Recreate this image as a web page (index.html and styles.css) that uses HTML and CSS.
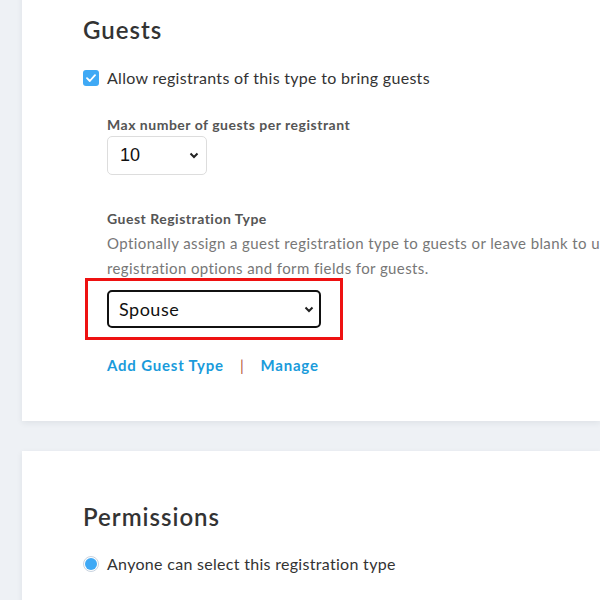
FILE: index.html
```html
<!DOCTYPE html>
<html lang="en">
<head>
    <meta charset="UTF-8">
    <meta name="viewport" content="width=device-width, initial-scale=1.0">
    <title>Registration Type</title>
    <link rel="stylesheet" href="styles.css">
</head>
<body>
    <div class="page">
        <section class="card card-guests">
            <h2>Guests</h2>
            <label class="check-row">
                <span class="checkbox">
                    <svg width="10" height="8" viewBox="0 0 10 8"><path d="M1 4.2 L3.8 7 L9 1.2" fill="none" stroke="#fff" stroke-width="1.8" stroke-linecap="round" stroke-linejoin="round"/></svg>
                </span>
                Allow registrants of this type to bring guests
            </label>

            <div class="sub">
                <div class="field">
                    <div class="field-label">Max number of guests per registrant</div>
                    <div class="select select-small">
                        <span>10</span>
                        <svg class="caret" width="10" height="7" viewBox="0 0 10 7"><path d="M1.5 1.5 L5 5 L8.5 1.5" fill="none" stroke="#222" stroke-width="2"/></svg>
                    </div>
                </div>

                <div class="field field-type">
                    <div class="field-label">Guest Registration Type</div>
                    <p class="help">Optionally assign a guest registration type to guests or leave blank to use the same registration options and form fields for guests.</p>
                    <div class="highlight">
                        <div class="select select-type">
                            <span>Spouse</span>
                            <svg class="caret" width="10" height="7" viewBox="0 0 10 7"><path d="M1.5 1.5 L5 5 L8.5 1.5" fill="none" stroke="#222" stroke-width="2"/></svg>
                        </div>
                    </div>
                    <div class="links">
                        <a href="#">Add Guest Type</a>
                        <span class="sep">|</span>
                        <a href="#">Manage</a>
                    </div>
                </div>
            </div>
        </section>

        <section class="card card-permissions">
            <h2>Permissions</h2>
            <label class="check-row">
                <span class="radio"><span class="dot"></span></span>
                Anyone can select this registration type
            </label>
        </section>
    </div>
</body>
</html>
```

FILE: styles.css
```css
body {
    margin: 0;
    background-color: #eef1f5;
    font-family: Lato, "Noto Sans", Arial, sans-serif;
    color: #333;
    overflow: hidden;
}

.page {
    display: flex;
    flex-direction: column;
    gap: 30px;
    padding-left: 22px;
    margin-top: -30px;
}

.card {
    background-color: white;
    padding: 0 0 0 61px;
    box-shadow: 0 2px 6px rgba(40, 50, 70, 0.08);
}

.card-guests {
    padding-top: 43px;
    box-sizing: border-box;
    height: 451px;
}

.card-permissions {
    padding-top: 49px;
    height: 200px;
}

h2 {
    margin: 0;
    font-size: 24px;
    font-weight: 600;
    letter-spacing: 1px;
    color: #333;
    line-height: 34px;
}

.check-row {
    display: flex;
    align-items: center;
    gap: 8px;
    font-size: 16px;
    letter-spacing: 0.3px;
    color: #333;
    margin-top: 19px;
    line-height: 24px;
}

.card-permissions .check-row {
    margin-top: 18px;
}

.checkbox {
    width: 16px;
    height: 16px;
    border-radius: 3px;
    background-color: #3fa9f5;
    display: flex;
    align-items: center;
    justify-content: center;
    flex-shrink: 0;
}

.radio {
    width: 14px;
    height: 14px;
    border: 1px solid #c9d3df;
    border-radius: 50%;
    display: flex;
    align-items: center;
    justify-content: center;
    flex-shrink: 0;
}

.radio .dot {
    width: 12px;
    height: 12px;
    border-radius: 50%;
    background-color: #3fa9f5;
}

.sub {
    padding-left: 24px;
    padding-top: 26px;
}

.field-label {
    font-size: 14px;
    font-weight: 700;
    letter-spacing: 0.5px;
    color: #555;
    line-height: 18px;
}

.select {
    display: flex;
    align-items: center;
    justify-content: space-between;
    box-sizing: border-box;
    background-color: white;
    color: #111;
    border-radius: 5px;
}

.select-small {
    width: 100px;
    height: 39px;
    margin-top: 2px;
    border: 1px solid #ddd;
    padding: 0 7px 0 12px;
    font-family: Arial, "Liberation Sans", sans-serif;
    font-size: 18px;
}

.field-type {
    margin-top: 35px;
}

.help {
    margin: 3px 0 0;
    font-size: 15px;
    letter-spacing: 0.4px;
    line-height: 25px;
    color: #777;
    width: 640px;
}

.highlight {
    margin: -3px 0 0 -22px;
    width: 258px;
    box-sizing: border-box;
    border: 3px solid #ee1111;
    padding: 9px 19px;
}

.select-type {
    width: 214px;
    height: 38px;
    border: 2px solid #111;
    padding: 0 5px 0 10px;
    font-size: 18px;
    letter-spacing: 0.5px;
}

.links {
    margin-top: 16px;
    display: flex;
    align-items: center;
    font-size: 15px;
    font-weight: 700;
    letter-spacing: 0.8px;
}

.links a {
    color: #1a9bdb;
    text-decoration: none;
}

.sep {
    color: #b5533c;
    font-weight: 400;
    margin: 0 16px 0 16px;
}
```
